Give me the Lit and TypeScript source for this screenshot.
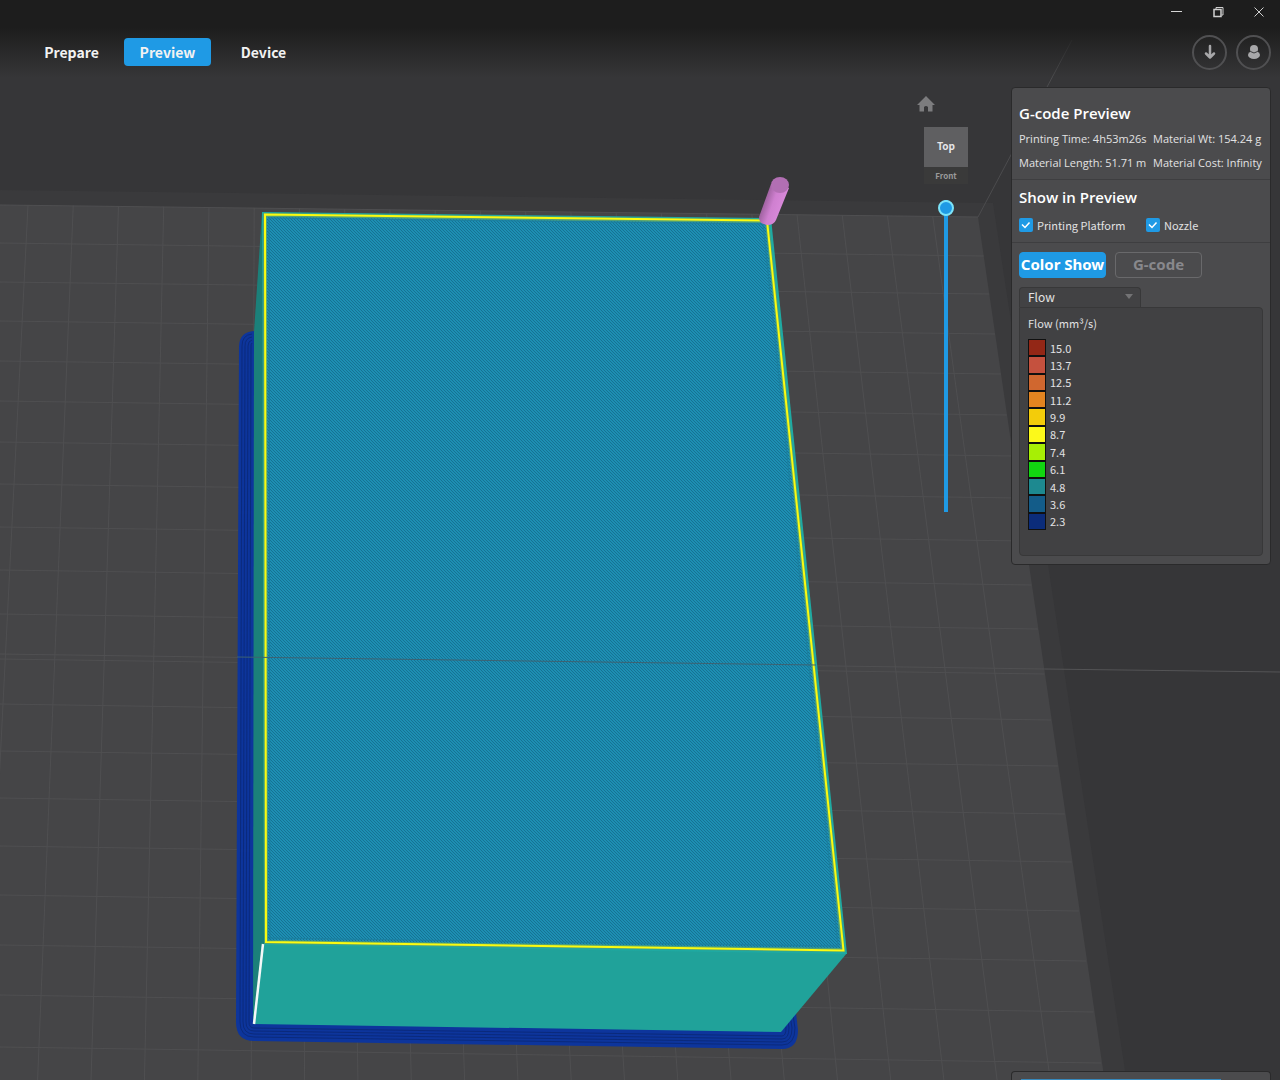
import { LitElement, html, svg, css } from "lit";
import { customElement, state } from "lit/decorators.js";

type Point = [number, number];

// Perspective grid of the printing platform: row heights at the left and right ends.
const ROWS_LEFT = [205, 243, 282, 321, 361, 401, 442, 484, 527, 570, 614, 659, 704, 751, 798, 846, 895, 945, 995, 1047];
const ROWS_RIGHT = [217, 256, 294, 334, 374, 415, 456, 498, 541, 585, 629, 674, 720, 766, 814, 862, 911, 961, 1012, 1063];
const COLUMNS = 21;
const TOP_EDGE: [Point, Point] = [[28, 205], [978, 217]];
const LOW_EDGE: [Point, Point] = [[-18, 1123], [1112, 1139]];

const mix = (a: number, b: number, t: number) => a + (b - a) * t;

@customElement("plate-scene")
class PlateScene extends LitElement {
  static styles = css`
    :host { display: block; }
    .canvas { display: block; width: 100%; height: 100%; }
  `;

  private gridPath() {
    const parts: string[] = [];
    for (let i = 0; i < COLUMNS; i++) {
      const t = i / COLUMNS;
      const x1 = mix(TOP_EDGE[0][0], TOP_EDGE[1][0], t);
      const y1 = mix(TOP_EDGE[0][1], TOP_EDGE[1][1], t);
      const x2 = mix(LOW_EDGE[0][0], LOW_EDGE[1][0], t);
      const y2 = mix(LOW_EDGE[0][1], LOW_EDGE[1][1], t);
      parts.push(`M${x1} ${y1}L${x2} ${y2}`);
    }
    ROWS_LEFT.forEach((y, i) => {
      const right = ROWS_RIGHT[i];
      const x = mix(978, 1112, (right - 217) / 922);
      parts.push(`M0 ${y}L${x} ${right}`);
    });
    return parts.join("");
  }

  private brimLoops() {
    return [3, 6, 9, 12].map((d) => svg`
      <path fill="none" stroke="#0b2a7c" stroke-width="1" d="
        M${252} ${331 + d} Q${239 + d} ${332 + d} ${239 + d} ${346}
        L${237 + d} 1022 Q${237 + d} ${1040 - d} 254 ${1040 - d}
        L782 ${1048 - d} Q${798 - d} ${1048 - d} ${798 - d} 1028 L${795 - d} 1008"/>`);
  }

  render() {
    return html`
      <svg class="canvas" viewBox="0 0 1280 1080" preserveAspectRatio="xMidYMid slice" aria-hidden="true">
        <defs>
          <pattern id="infill" width="3" height="3" patternUnits="userSpaceOnUse">
            <rect width="3" height="3" fill="#1d8fb3"/>
            <path d="M0 0h1v1h1v1h1v1h-1v-1h-1v-1h-1z" fill="#167293"/>
          </pattern>
          <linearGradient id="rod" gradientUnits="userSpaceOnUse" x1="764" y1="200" x2="784" y2="207">
            <stop offset="0" stop-color="#9a5f9b"/>
            <stop offset="0.45" stop-color="#cf80d0"/>
            <stop offset="1" stop-color="#da8adb"/>
          </linearGradient>
        </defs>
        <rect width="1280" height="1080" fill="#363638"/>
        <path d="M0 190L993 203L1128 1090H0z" fill="#3a3a3c"/>
        <path d="M0 205L978 217L1106 1090H0z" fill="#454547"/>
        <path d="${this.gridPath()}" fill="none" stroke="#4f4f51"/>
        <path d="M978 217L1072 40" stroke="#4c4c4e" fill="none"/>
        <path d="M0 654L1045 669" stroke="#505052" fill="none"/>
        <path d="M1045 669L1280 672" stroke="#545456" fill="none"/>

        <path d="M256 331Q239 331 239 347L236 1022Q236 1041 254 1041L782 1049Q798 1049 798 1030L795 1004L700 900H256z" fill="#0d359c"/>
        ${this.brimLoops()}

        <path d="M262 212L254 332L253 1024L265 944z" fill="#1b807a"/>
        <path d="M264 943L847 953L781 1032L253 1024z" fill="#20a29a"/>
        <path d="M262 212L771 218L847 954L264 945z" fill="#1fa9a2"/>
        <path d="M265 215L767 221L843 950L266 942z" fill="url(#infill)" stroke="#4f9f78" stroke-width="4"/>
        <path d="M269 218L763 224L838 946L270 938z" fill="none" stroke="#1b7f9f"/>
        <path d="M265 214.500L767 220.500L843.500 950.500L266 942z" fill="none" stroke="#fbfb10" stroke-width="2"/>
        <path d="M263 944L254 1024" stroke="#f4f8f8" stroke-width="2.500"/>
        <path d="M237 657L816 665" stroke="#3d6272" stroke-width="1"/>

        <path d="M771 184L759 217Q759 224 767 225Q774 225 776 220L789 188z" fill="url(#rod)"/>
        <ellipse cx="780" cy="185" rx="9" ry="8" fill="#b26fb3"/>
      </svg>
    `;
  }
}

@customElement("view-tools")
class ViewTools extends LitElement {
  static styles = css`
    :host { display: flex; flex-direction: column; align-items: center; width: 58px; }
    button { border: 0; padding: 0; font-family: "Noto Sans CJK SC", "Noto Sans", sans-serif; }
    .home { align-self: flex-start; width: 18px; height: 16px; background: none; }
    .home svg { display: block; }
    .cube { display: flex; flex-direction: column; width: 44px; margin: 15px 0 16px; }
    .top { height: 40px; padding-bottom: 2px; background: #5f5f61; color: #e6e6e8; font-size: 10px; font-weight: 700; line-height: 16px; }
    .front { height: 17px; background: #3a3a3a; color: #9a9a9a; font-size: 8px; font-weight: 700; line-height: 8px; }
    .layers {
      appearance: none; writing-mode: vertical-lr; direction: rtl;
      width: 16px; height: 312px; margin: 0; background: none;
    }
    .layers::-webkit-slider-runnable-track {
      width: 16px; height: 100%;
      background: linear-gradient(#1f9ae5, #1f9ae5) center / 4px 100% no-repeat;
    }
    .layers::-webkit-slider-thumb {
      appearance: none; box-sizing: border-box; width: 16px; height: 16px;
      border: 2px solid #7ce3f8; border-radius: 50%; background: #1f9ae5;
    }
  `;

  render() {
    return html`
      <button class="home" aria-label="Home view">
        <svg width="18" height="16" viewBox="0 0 18 16" fill="#7c7c7e">
          <path d="M9 0L18 9H15.500V15.500H11V11Q9 9 7 11V15.500H2.500V9H0z"/>
        </svg>
      </button>
      <div class="cube">
        <button class="top">Top</button>
        <button class="front">Front</button>
      </div>
      <input class="layers" type="range" min="0" max="100" value="100" aria-label="Layer">
    `;
  }
}

@customElement("gcode-panel")
class GcodePanel extends LitElement {
  static styles = css`
    :host {
      display: block; box-sizing: border-box; padding: 14px 0 8px;
      border: 1px solid #2a2a2b; border-radius: 4px; background: #4b4b4d;
      color: #e2e2e3; font: 11px/16px "Open Sans", "Noto Sans", sans-serif;
    }
    section { padding: 0 7px; }
    .rule { height: 0; margin: 0; border: 0; border-top: 1px solid #3e3e40; }
    h2 { margin: 0; color: #fff; font-size: 15px; font-weight: 600; line-height: 22px; }
    .stats {
      display: grid; grid-template-columns: 134px 1fr; row-gap: 8px;
      margin: 7px 0 8px; white-space: nowrap;
    }
    .checks {
      display: grid; grid-template-columns: 127px 1fr; margin: 9px 0;
      font-family: "Noto Sans CJK SC", "Noto Sans", sans-serif;
    }
    .show { padding-top: 6px; }
    .check { display: flex; align-items: center; gap: 4px; }
    .check input {
      appearance: none; width: 14px; height: 14px; margin: 0; border-radius: 2px; background: #5c5c5e;
    }
    .check input:checked {
      background: #1f9ae5 url('data:image/svg+xml,<svg xmlns="http://www.w3.org/2000/svg" viewBox="0 0 14 14"><path d="M3 6.500L6 9.500L10.500 4.500" fill="none" stroke="white" stroke-width="1.500"/></svg>');
    }
    .modes { display: flex; gap: 9px; padding-top: 9px; }
    .mode {
      box-sizing: border-box; width: 87px; height: 26px; padding: 0 0 2px; border: 1px solid #69696b;
      border-radius: 4px; background: none; color: #88888c; white-space: nowrap;
      font: 700 15px/22px "Noto Sans", "Open Sans", sans-serif;
    }
    .mode.on { border-color: #1f9ae5; background: #1f9ae5; color: #fff; }
    .metric { position: relative; width: 122px; margin-top: 9px; }
    .metric select {
      appearance: none; display: block; box-sizing: border-box; width: 100%; height: 20px; padding: 0 8px 2px;
      border: 1px solid #383839; border-bottom: 0; border-radius: 4px 4px 0 0;
      background: #424244; color: #e2e2e3; font: 12px/16px "Noto Sans CJK SC", "Noto Sans", sans-serif;
    }
    .metric svg { position: absolute; right: 8px; top: 7px; pointer-events: none; }
    .legend {
      box-sizing: border-box; width: 244px; max-width: 100%; padding: 7px 8px 25px;
      border: 1px solid #383839; border-radius: 0 4px 4px 4px; background: #414143;
      font: 11px/16px "Noto Sans CJK SC", "Noto Sans", sans-serif;
    }
    .legend h3 { margin: 0 0 8px; font-size: 11px; font-weight: 400; line-height: 16px; }
    .scale {
      display: grid; grid-auto-rows: 1fr; height: 191px; margin: 0; padding: 0; list-style: none;
    }
    .step { display: flex; align-items: center; gap: 4px; line-height: 16px; }
    .swatch { box-sizing: border-box; width: 18px; height: 100%; border: 1px solid #101010; }
  `;

  @state() private mode = "Color Show";

  private steps: [string, string][] = [
    ["#932716", "15.0"], ["#c5513e", "13.7"], ["#d0672f", "12.5"], ["#e28420", "11.2"],
    ["#f3cc0a", "9.9"], ["#fcf91a", "8.7"], ["#a7ef05", "7.4"], ["#12d611", "6.1"],
    ["#1d8990", "4.8"], ["#135c89", "3.6"], ["#0b2c7a", "2.3"],
  ];

  render() {
    return html`
      <section>
        <h2>G-code Preview</h2>
        <div class="stats">
          <span>Printing Time: 4h53m26s</span><span>Material Wt: 154.24 g</span>
          <span>Material Length: 51.71 m</span><span>Material Cost: Infinity</span>
        </div>
      </section>
      <hr class="rule">
      <section class="show">
        <h2>Show in Preview</h2>
        <div class="checks">
          <label class="check"><input type="checkbox" checked>Printing Platform</label>
          <label class="check"><input type="checkbox" checked>Nozzle</label>
        </div>
      </section>
      <hr class="rule">
      <section>
        <div class="modes">
          ${["Color Show", "G-code"].map((name) => html`
            <button class="mode ${this.mode === name ? "on" : ""}" @click=${() => (this.mode = name)}>${name}</button>`)}
        </div>
        <div class="metric">
          <select aria-label="Color by"><option>Flow</option></select>
          <svg width="8" height="6" viewBox="0 0 8 6"><path d="M0 0H8L4 5z" fill="#737375"/></svg>
        </div>
        <div class="legend">
          <h3>Flow (mm³/s)</h3>
          <ul class="scale">
            ${this.steps.map(([color, label]) => html`
              <li class="step"><span class="swatch" style="background:${color}"></span>${label}</li>`)}
          </ul>
        </div>
      </section>
    `;
  }
}

@customElement("app-root")
class AppRoot extends LitElement {
  static styles = css`
    :host {
      display: flex; flex-direction: column; position: relative; height: 100vh; overflow: hidden;
      background: #363638; font-family: "Noto Sans CJK SC", "Noto Sans", sans-serif;
    }
    button { border: 0; padding: 0; background: none; }
    .scene { position: absolute; inset: 0; }
    header {
      position: relative; background: linear-gradient(#1d1d1d 28px, rgba(29, 29, 29, 0) 78px);
    }
    .titlebar { display: flex; justify-content: flex-end; gap: 17px; height: 24px; padding-right: 9px; }
    .win { display: grid; place-items: center; width: 24px; height: 24px; }
    .bar { display: flex; align-items: center; height: 56px; padding: 0 9px 0 28px; }
    nav { display: flex; gap: 9px; flex: 1; }
    .tab {
      width: 87px; height: 28px; border-radius: 4px; color: #f2f2f2; text-align: center;
      text-decoration: none; font-size: 14px; font-weight: 700; line-height: 28px;
    }
    .tab.on { background: #1f9ae5; }
    .actions { display: flex; gap: 9px; }
    .round {
      box-sizing: border-box; display: grid; place-items: center; width: 35px; height: 35px;
      border: 2px solid #505052; border-radius: 50%;
    }
    main { position: relative; display: flex; flex: 1; justify-content: flex-end; gap: 36px; padding-right: 9px; }
    view-tools { margin-top: 16px; }
    aside { display: flex; flex-direction: column; width: 260px; padding-top: 7px; }
    .slice {
      box-sizing: border-box; height: 9px; margin-top: auto; padding: 7px 9px 0;
      border: 1px solid #2a2a2b; border-bottom: 0; border-radius: 4px 4px 0 0; background: #4b4b4d;
    }
    .slice-bar { width: 200px; height: 1px; background: #3689bd; }
  `;

  render() {
    return html`
      <plate-scene class="scene"></plate-scene>
      <header>
        <div class="titlebar">
          <button class="win" aria-label="Minimize">
            <svg width="12" height="12" viewBox="0 0 12 12"><path d="M0 5.500H11" stroke="#d6d6d6"/></svg>
          </button>
          <button class="win" aria-label="Restore">
            <svg width="12" height="12" viewBox="0 0 12 12" fill="none" stroke="#cfcfcf">
              <rect x="2" y="3.500" width="7" height="7" stroke-width="1.500"/><path d="M4 3V1.500H11V9H9.500"/>
            </svg>
          </button>
          <button class="win" aria-label="Close">
            <svg width="12" height="12" viewBox="0 0 12 12" stroke="#cfcfcf"><path d="M1.500 1.500L10.500 10.500M10.500 1.500L1.500 10.500"/></svg>
          </button>
        </div>
        <div class="bar">
          <nav>
            <a class="tab" href="#prepare">Prepare</a>
            <a class="tab on" href="#preview">Preview</a>
            <a class="tab" href="#device">Device</a>
          </nav>
          <div class="actions">
            <button class="round" aria-label="Downloads">
              <svg width="16" height="16" viewBox="0 0 16 16" fill="none" stroke="#a8a8aa" stroke-width="2.500" stroke-linecap="round" stroke-linejoin="round">
                <path d="M8 2V13M4 9.500L8 13.500L12 9.500"/>
              </svg>
            </button>
            <button class="round" aria-label="Account">
              <svg width="16" height="16" viewBox="0 0 16 16" fill="#a8a8aa">
                <circle cx="8" cy="5" r="4"/><ellipse cx="8" cy="11" rx="6" ry="4"/>
                <path d="M4.500 7.500Q8 10.500 11.500 7.500" stroke="#38383a" fill="none"/>
              </svg>
            </button>
          </div>
        </div>
      </header>
      <main>
        <view-tools></view-tools>
        <aside>
          <gcode-panel></gcode-panel>
          <div class="slice"><div class="slice-bar"></div></div>
        </aside>
      </main>
    `;
  }
}
